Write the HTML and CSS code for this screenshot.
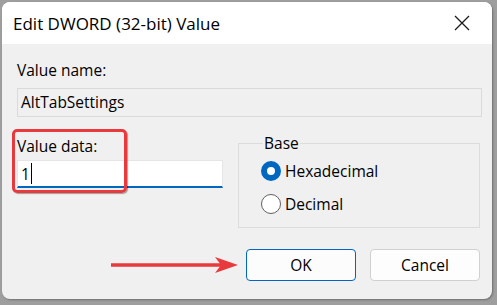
FILE: index.html
```html
<!DOCTYPE html>
<html lang="en">
<head>
    <meta charset="UTF-8">
    <title>Edit DWORD (32-bit) Value</title>
    <link rel="stylesheet" href="styles.css">
</head>
<body>
    <div class="window">
        <div class="titlebar">
            <span class="title">Edit DWORD (32-bit) Value</span>
            <svg class="close" width="16" height="16" viewBox="0 0 16 16">
                <path d="M1 1 L15 15 M15 1 L1 15" stroke="#1a1a1a" stroke-width="1.3" fill="none"/>
            </svg>
        </div>

        <div class="content">
            <label class="label">Value name:</label>
            <div class="field readonly">AltTabSettings</div>

            <div class="row">
                <div class="data-col">
                    <label class="label">Value data:</label>
                    <div class="field edit">1<span class="caret"></span></div>
                    <!-- annotation box round the value data -->
                    <div class="highlight"></div>
                </div>

                <fieldset class="base">
                    <legend>Base</legend>
                    <div class="radio checked"><span class="dot"></span>Hexadecimal</div>
                    <div class="radio"><span class="dot"></span>Decimal</div>
                </fieldset>
            </div>

            <div class="buttons">
                <svg class="arrow" width="128" height="20" viewBox="0 0 128 20">
                    <path d="M0 10 H112" stroke="#e8393d" stroke-width="3.5"/>
                    <path d="M104 2 L127 10 L104 18 L110 10 Z" fill="#e8393d"/>
                </svg>
                <button class="btn default">OK</button>
                <button class="btn">Cancel</button>
            </div>
        </div>
    </div>
</body>
</html>
```

FILE: styles.css
```css
body {
    margin: 0;
    width: 497px;
    height: 305px;
    overflow: hidden;
    background-color: #9e9e9e;
    font-family: 'Open Sans', 'Noto Sans', sans-serif;
    color: #000;
}
.window {
    margin: 2px 0 0 2px;
    width: 490px;
    height: 297px;
    background-color: #f0f0f0;
    border-radius: 8px;
    overflow: hidden;
    position: relative;
    box-shadow: 1px 1px 2px rgba(0, 0, 0, 0.3);
}
.titlebar {
    height: 42px;
    background-color: #fff;
    display: flex;
    align-items: center;
    justify-content: space-between;
    padding: 0 22px 0 11px;
}
.title {
    font-size: 17px;
    color: #000;
}
.close {
    display: block;
}
.content {
    padding: 16px 10px 0 15px;
}
.label {
    display: block;
    font-size: 15.5px;
    line-height: 20px;
}
.field {
    box-sizing: border-box;
    font-size: 15.5px;
    padding: 0 3px;
}
.readonly {
    margin-top: 8px;
    width: 465px;
    height: 29px;
    line-height: 27px;
    border: 1px solid #dadada;
    background-color: #f0f0f0;
}
.row {
    display: flex;
    margin-top: 13px;
}
.data-col {
    position: relative;
    width: 221px;
    flex-shrink: 0;
    padding-top: 6px;
}
.edit {
    margin-top: 4px;
    width: 206px;
    height: 28px;
    background-color: #fff;
    border: 1px solid #e5e5e5;
    border-bottom: 2px solid #0067c0;
    display: flex;
    align-items: center;
}
.caret {
    display: inline-block;
    width: 1px;
    height: 21px;
    background-color: #000;
    margin-left: 1px;
}
.highlight {
    position: absolute;
    left: -5px;
    top: -1px;
    width: 115px;
    height: 64px;
    box-sizing: border-box;
    border: 3px solid #e8393d;
    border-radius: 5px;
    box-shadow: 1px 1px 1px rgba(0, 0, 0, 0.35);
}
.base {
    margin: 2px 0 0 0;
    width: 242px;
    height: 96px;
    box-sizing: border-box;
    border: 1px solid #dcdcdc;
    padding: 0 0 0 22px;
}
.base legend {
    font-size: 15.5px;
    padding: 0 1px;
    margin-left: 2px;
}
.radio {
    display: flex;
    align-items: center;
    font-size: 15.5px;
    height: 33px;
}
.dot {
    width: 20px;
    height: 20px;
    border-radius: 50%;
    box-sizing: border-box;
    border: 1px solid #5f5f5f;
    background-color: #fff;
    margin-right: 4px;
}
.radio.checked .dot {
    border: 6px solid #0067c0;
    background-color: #fff;
}
.buttons {
    display: flex;
    align-items: center;
    margin-top: 21px;
    padding-left: 94px;
}
.arrow {
    display: block;
    flex-shrink: 0;
    margin-right: 7px;
}
.btn {
    flex-shrink: 0;
    width: 110px;
    height: 32px;
    font-family: inherit;
    font-size: 15.5px;
    background-color: #fdfdfd;
    border: 1px solid #d0d0d0;
    border-radius: 4px;
    margin-right: 14px;
}
.btn.default {
    background-color: #fcfcfc;
    border-color: #0067c0;
}
```
